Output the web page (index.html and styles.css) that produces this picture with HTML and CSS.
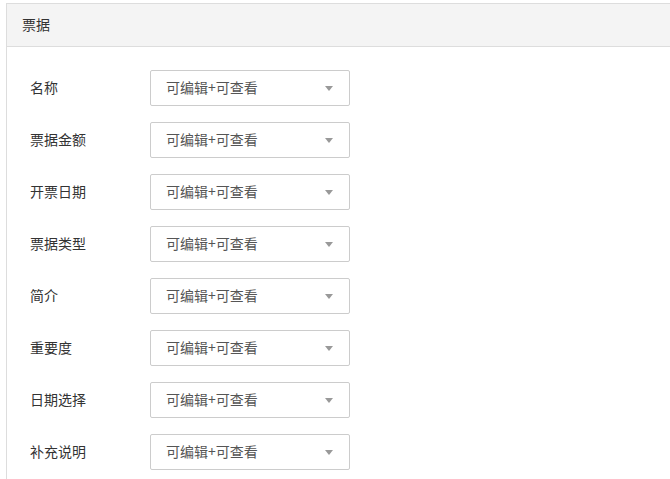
FILE: index.html
```html
<!DOCTYPE html>
<html lang="zh">
<head>
<meta charset="utf-8">
<title>票据</title>
<link rel="stylesheet" href="styles.css">
</head>
<body>
<div class="panel">
  <div class="panel-head">票据</div>
  <div class="panel-body">
    <div class="row"><span class="label">名称</span><div class="select"><span>可编辑+可查看</span><i class="caret"></i></div></div>
    <div class="row"><span class="label">票据金额</span><div class="select"><span>可编辑+可查看</span><i class="caret"></i></div></div>
    <div class="row"><span class="label">开票日期</span><div class="select"><span>可编辑+可查看</span><i class="caret"></i></div></div>
    <div class="row"><span class="label">票据类型</span><div class="select"><span>可编辑+可查看</span><i class="caret"></i></div></div>
    <div class="row"><span class="label">简介</span><div class="select"><span>可编辑+可查看</span><i class="caret"></i></div></div>
    <div class="row"><span class="label">重要度</span><div class="select"><span>可编辑+可查看</span><i class="caret"></i></div></div>
    <div class="row"><span class="label">日期选择</span><div class="select"><span>可编辑+可查看</span><i class="caret"></i></div></div>
    <div class="row"><span class="label">补充说明</span><div class="select"><span>可编辑+可查看</span><i class="caret"></i></div></div>
  </div>
</div>
</body>
</html>
```
FILE: styles.css
```css
html, body {
  margin: 0;
  padding: 0;
  background: #fff;
  overflow: hidden;
}
body {
  font-family: "Noto Sans CJK SC", "Noto Sans", sans-serif;
  font-size: 14px;
  color: #333;
}
.panel {
  margin: 3px 0 0 6px;
  height: calc(100vh - 3px);
  border: 1px solid #ddd;
  border-right: 0;
  border-bottom: 0;
  box-sizing: border-box;
  overflow: hidden;
}
.panel-head {
  height: 42px;
  line-height: 40px;
  padding-left: 15px;
  padding-bottom: 0;
  background: #f4f4f4;
  border-bottom: 1px solid #ddd;
  color: #333;
}
.panel-body {
  padding: 23px 0 0 23px;
  display: flex;
  flex-direction: column;
  gap: 16px;
}
.row {
  display: flex;
  align-items: center;
  height: 36px;
}
.label {
  width: 120px;
  color: #333;
  line-height: 18px;
  padding-bottom: 2px;
}
.select {
  width: 200px;
  height: 36px;
  box-sizing: border-box;
  border: 1px solid #ccc;
  border-radius: 2px;
  display: flex;
  align-items: center;
  justify-content: space-between;
  padding: 0 16px 0 15px;
  color: #555;
}
.select span {
  line-height: 18px;
  padding-bottom: 2px;
}
.caret {
  width: 0;
  height: 0;
  border-left: 4px solid transparent;
  border-right: 4px solid transparent;
  border-top: 5px solid #999;
}
```
